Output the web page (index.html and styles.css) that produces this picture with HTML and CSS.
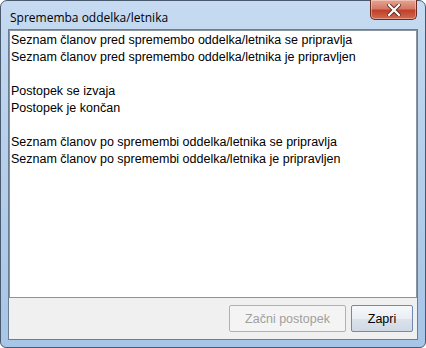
FILE: index.html
```html
<!DOCTYPE html>
<html lang="sl">
<head>
    <meta charset="UTF-8">
    <title>Sprememba oddelka/letnika</title>
    <link rel="stylesheet" href="styles.css">
</head>
<body>
    <div class="window">
        <div class="titlebar">
            <span class="title">Sprememba oddelka/letnika</span>
            <div class="close-btn">
                <svg width="14" height="12" viewBox="0 0 14 12">
                    <path d="M2 1 L12 11 M12 1 L2 11" stroke="#5a2a22" stroke-width="4" stroke-linecap="square"/>
                    <path d="M2 1 L12 11 M12 1 L2 11" stroke="#ffffff" stroke-width="2.2" stroke-linecap="square"/>
                </svg>
            </div>
        </div>

        <div class="client">
            <div class="log">
                <p>Seznam članov pred spremembo oddelka/letnika se pripravlja</p>
                <p>Seznam članov pred spremembo oddelka/letnika je pripravljen</p>
                <p>&nbsp;</p>
                <p>Postopek se izvaja</p>
                <p>Postopek je končan</p>
                <p>&nbsp;</p>
                <p>Seznam članov po spremembi oddelka/letnika se pripravlja</p>
                <p>Seznam članov po spremembi oddelka/letnika je pripravljen</p>
            </div>

            <div class="actions">
                <button class="btn" disabled>Začni postopek</button>
                <button class="btn">Zapri</button>
            </div>
        </div>
    </div>
</body>
</html>
```

FILE: styles.css
```css
/* General */
body {
    margin: 0;
    padding: 0;
    background: #ffffff;
    font-family: "Liberation Sans", Arial, sans-serif;
}

/* Window frame */
.window {
    width: 426px;
    height: 348px;
    box-sizing: border-box;
    display: flex;
    flex-direction: column;
    padding: 0 7px 7px 7px;
    border: 1px solid #4a5a6e;
    border-radius: 7px 7px 6px 6px;
    background: linear-gradient(to bottom, #c6dbf1 0%, #bad2ec 30%, #a7c5e6 100%);
}

/* Title bar */
.titlebar {
    height: 28px;
    display: flex;
    justify-content: space-between;
    align-items: flex-start;
}

.title {
    margin-top: 8px;
    margin-left: 2px;
    font-family: "Open Sans", "Noto Sans", sans-serif;
    font-size: 12px;
    color: #000000;
}

.close-btn {
    width: 45px;
    height: 19px;
    margin-top: -1px;
    margin-right: 1px;
    display: flex;
    align-items: center;
    justify-content: center;
    border: 1px solid #6b2a22;
    border-top: none;
    border-radius: 0 0 5px 5px;
    background: linear-gradient(to bottom, #e8a493 0%, #d47a66 45%, #c0412a 55%, #d06a4e 100%);
    box-shadow: inset 0 0 0 1px rgba(255, 255, 255, 0.35);
}

/* Client area */
.client {
    flex: 1;
    display: flex;
    flex-direction: column;
    border: 1px solid #6b7d91;
    background: #f0f0f0;
}

.log {
    flex: 1;
    background: #ffffff;
    border: 1px solid #8a949e;
    padding: 1px 1px;
    font-size: 12.5px;
    color: #000000;
}

.log p {
    margin: 0;
    line-height: 17px;
}

/* Buttons */
.actions {
    height: 41px;
    display: flex;
    justify-content: flex-end;
    align-items: center;
    gap: 5px;
    padding-right: 4px;
}

.btn {
    height: 27px;
    padding: 0 12px;
    font-family: "Liberation Sans", Arial, sans-serif;
    font-size: 12.5px;
    color: #000000;
    border: 1px solid #707070;
    border-radius: 2px;
    background: linear-gradient(to bottom, #f4f4f4 0%, #ebebeb 50%, #dddddd 51%, #cfcfcf 100%);
}

.btn:last-child {
    width: 62px;
    border-color: #6e8aae;
    background: linear-gradient(to bottom, #f6f8fb 0%, #e9eef4 50%, #dbe3ec 51%, #cfd9e5 100%);
}

.btn:disabled {
    width: 117px;
    color: #a0a0a0;
    border-color: #adb2b5;
    background: #f4f4f4;
}
```
